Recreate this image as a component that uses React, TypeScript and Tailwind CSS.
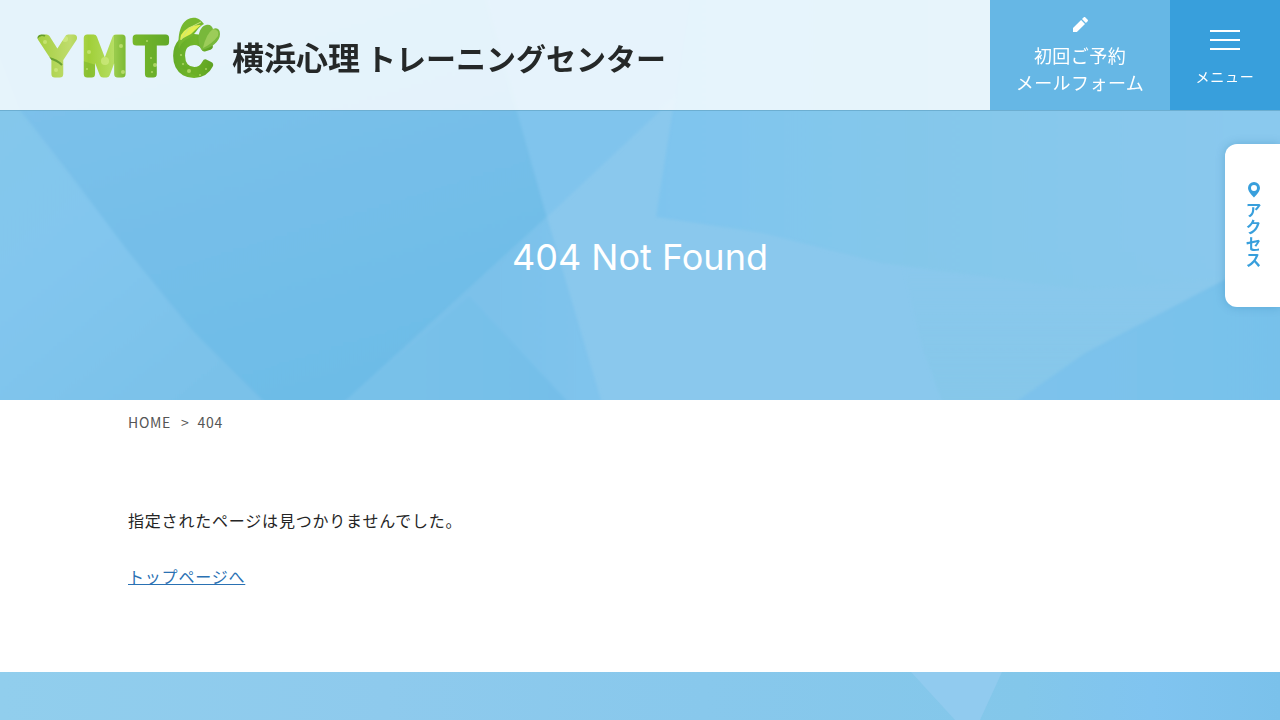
function HeroBackground() {
  return (
    <svg
      className="absolute inset-0 h-full w-full"
      viewBox="0 0 1280 400"
      preserveAspectRatio="none"
      aria-hidden="true"
    >
      <defs>
        <linearGradient id="heroLeft" x1="0" y1="0" x2="0.6" y2="1">
          <stop offset="0" stopColor="#85c7e8" />
          <stop offset="0.6" stopColor="#82c6ee" />
          <stop offset="1" stopColor="#7ac1e9" />
        </linearGradient>
        <linearGradient id="heroDeep" x1="0" y1="0" x2="0.4" y2="1">
          <stop offset="0" stopColor="#80c3ec" />
          <stop offset="0.5" stopColor="#77bfe9" />
          <stop offset="1" stopColor="#6dbce7" />
        </linearGradient>
        <linearGradient id="heroFold" x1="0" y1="0" x2="1" y2="0">
          <stop offset="0" stopColor="#78c1e9" />
          <stop offset="0.6" stopColor="#7bc1ea" />
          <stop offset="1" stopColor="#80c4ed" />
        </linearGradient>
        <linearGradient id="heroFoldDark" x1="0" y1="0" x2="1" y2="0">
          <stop offset="0.3" stopColor="#78c1e9" />
          <stop offset="1" stopColor="#74bee9" />
        </linearGradient>
        <linearGradient id="heroTop" x1="0" y1="0" x2="1" y2="0">
          <stop offset="0" stopColor="#7ec4ee" />
          <stop offset="0.18" stopColor="#81c6ed" />
          <stop offset="0.4" stopColor="#84c7ea" />
          <stop offset="1" stopColor="#8ac9ee" />
        </linearGradient>
        <linearGradient id="heroFade" x1="0" y1="0" x2="0" y2="1">
          <stop offset="0" stopColor="#85c7e9" stopOpacity="0" />
          <stop offset="1" stopColor="#85c7e9" />
        </linearGradient>
        <linearGradient id="heroCorner" x1="0" y1="0" x2="1" y2="0">
          <stop offset="0" stopColor="#7ec2ec" />
          <stop offset="1" stopColor="#76c1ea" />
        </linearGradient>
        <filter id="soften" x="-5%" y="-5%" width="110%" height="110%">
          <feGaussianBlur stdDeviation="1.5" />
        </filter>
      </defs>
      <rect width="1280" height="400" fill="#8ac8ed" />
      <g filter="url(#soften)">
        <polygon points="-40,-20 -40,420 290,420 192,330 20,110 -30,-20" fill="url(#heroLeft)" />
        <polygon points="-30,-20 480,-20 547,217 325,420 282,420 192,330 127,250 69,173 20,110" fill="url(#heroDeep)" />
        <polygon points="325,420 547,217 607,420" fill="url(#heroFold)" />
        <polygon points="325,420 469,297 585,420" fill="url(#heroFoldDark)" />
        <polygon points="480,-20 800,-20 547,217" fill="#80c4ed" />
        <polygon points="693,-20 1300,-20 1300,235 1224,280 1085,290 881,263 762,233 656,217" fill="url(#heroTop)" />
        <polygon points="900,250 1270,250 1224,280 1085,353 990,420 949,420 922,347" fill="url(#heroFade)" />
        <polygon points="1300,235 1224,280 1085,353 990,420 1300,420" fill="url(#heroCorner)" />
      </g>
    </svg>
  );
}

function LogoMark() {
  return (
    <svg className="h-[74px] w-[188px] shrink-0" viewBox="0 0 188 74" role="img" aria-label="YMTC">
      <defs>
        <linearGradient id="leafTone" x1="0" y1="0" x2="1" y2="0">
          <stop offset="0" stopColor="#a3ce3e" />
          <stop offset="0.18" stopColor="#bfdc6c" />
          <stop offset="0.28" stopColor="#a0cf38" />
          <stop offset="0.42" stopColor="#b7df65" />
          <stop offset="0.5" stopColor="#79b92b" />
          <stop offset="0.7" stopColor="#62a928" />
          <stop offset="0.85" stopColor="#71b62a" />
          <stop offset="1" stopColor="#4f911f" />
        </linearGradient>
        <pattern id="leafFill" width="188" height="74" patternUnits="userSpaceOnUse">
          <rect width="188" height="74" fill="url(#leafTone)" />
          <path d="M44 45l16 5-2 16H44zM78 20h14v46H78zM144 52l20-5 22 5-18 14z" fill="#62a51e" opacity=".35" />
          <path d="M0 24q4-6 9-3M13 43q8 2 13 7" fill="none" stroke="#397c18" strokeWidth="2" opacity=".6" />
          <g fill="#d6ef88" opacity=".6">
            <circle cx="9" cy="27" r="2" />
            <circle cx="29" cy="24" r="3" />
            <circle cx="20" cy="55" r="2" />
            <circle cx="53" cy="37" r="2" />
            <circle cx="51" cy="54" r="1" />
            <circle cx="69" cy="46" r="4" />
            <circle cx="85" cy="31" r="2" />
            <circle cx="87" cy="57" r="2" />
            <circle cx="111" cy="26" r="1" />
            <circle cx="115" cy="43" r="1" />
            <circle cx="119" cy="50" r="2" />
            <circle cx="116" cy="57" r="1" />
            <circle cx="145" cy="40" r="1" />
            <circle cx="147" cy="49" r="1" />
            <circle cx="153" cy="56" r="2" />
            <circle cx="164" cy="60" r="1" />
            <circle cx="170" cy="54" r="1" />
          </g>
        </pattern>
      </defs>
      <text
        x="4 47 99 138"
        y="59"
        fontFamily="'Liberation Sans', Arial, sans-serif"
        fontSize="52"
        fill="url(#leafFill)"
        stroke="url(#leafFill)"
        strokeWidth="7"
        strokeLinejoin="round"
      >
        YMTC
      </text>
      {/* Leaves on top of the C */}
      <path d="M143 34C141 17 146 4 156 3c5-1 9 2 12 6-6 3-8 9-12 12-5 4-10 4-13 13z" fill="#76b82f" />
      <path d="M145 20q7-11 20-10-6 5-10 9-6 3-11 6z" fill="#e4ef52" />
      <path d="m145 25 8-12 12-6" fill="none" stroke="#c9e57e" strokeWidth="1" />
      <path d="M166 35C160 27 162 12 170 10c4-1 6 1 7 4 4-2 7 0 7 5 0 8-9 14-18 16z" fill="#78b83b" />
      <path d="M167 33q3-14 10-19 7 1 5 7-6 8-15 12z" fill="#9ccc59" />
    </svg>
  );
}

function Header() {
  return (
    <header className="fixed inset-x-0 top-0 z-20 flex h-[111px] border-b border-[#6caed1]">
      <div className="flex min-w-0 flex-1 items-start bg-white/80 pt-[15px] pl-9">
        <a href="#top" className="flex items-start gap-2 text-[#252828]">
          <LogoMark />
          <span className="flex items-baseline gap-1.5 pt-5 leading-[42px] font-bold whitespace-nowrap">
            <span className="text-[32px]">横浜心理</span>
            <span className="text-[30px]">トレーニングセンター</span>
          </span>
        </a>
      </div>
      <a
        href="#reserve"
        className="flex w-[180px] shrink-0 flex-col items-center bg-[#66b7e5] pt-[15px] text-center text-lg leading-[27px] tracking-wide text-white"
      >
        <svg className="mb-[9px] size-[18px]" viewBox="0 0 18 18" fill="currentColor" aria-hidden="true">
          <path d="M2 13.1V17h3.9L14 8.9 10.1 5zM16.7 6.2c.4-.4.4-1 0-1.4l-2.5-2.5c-.4-.4-1-.4-1.4 0L11 4.1 14.9 8z" />
        </svg>
        <span>初回ご予約</span>
        <span>メールフォーム</span>
      </a>
      <button
        type="button"
        className="flex w-[110px] shrink-0 flex-col items-center bg-[#389fdc] pt-[30px] text-sm tracking-wider text-white"
      >
        <span className="flex flex-col gap-[7px]" aria-hidden="true">
          <span className="h-0.5 w-[30px] bg-white" />
          <span className="h-0.5 w-[30px] bg-white" />
          <span className="h-0.5 w-[30px] bg-white" />
        </span>
        <span className="mt-4">メニュー</span>
      </button>
    </header>
  );
}

function AccessTab() {
  return (
    <a
      href="#access"
      className="fixed top-36 right-0 z-10 flex h-[163px] w-[55px] flex-col items-center justify-center gap-1 rounded-l-xl bg-white pl-0.5 text-[#389fdc] shadow-[0_0_10px_rgba(0,90,150,0.25)]"
    >
      <svg className="h-4 w-3" viewBox="0 0 12 16" fill="currentColor" fillRule="evenodd" aria-hidden="true">
        <path d="M6 0a6 6 0 0 0-6 6c0 4 6 9.5 6 9.5S12 10 12 6a6 6 0 0 0-6-6zm0 3a3 3 0 1 1 0 6 3 3 0 0 1 0-6z" />
      </svg>
      <span className="text-base leading-5 font-bold tracking-wider [writing-mode:vertical-rl]">
        アクセス
      </span>
    </a>
  );
}

export default function App() {
  return (
    <div
      id="top"
      lang="ja"
      className="flex min-h-screen flex-col bg-white font-['Noto_Sans_CJK_JP',sans-serif] text-[#252525]"
    >
      <Header />
      <AccessTab />

      <div className="relative flex h-[400px] items-center justify-center overflow-hidden pt-[114px]">
        <HeroBackground />
        <h1 className="relative font-[Inter,sans-serif] text-4xl text-white">404 Not Found</h1>
      </div>

      <main className="px-[10%] pb-[82px]">
        <nav aria-label="breadcrumb" className="pt-3">
          <ol className="flex gap-2.5 text-sm tracking-wider text-[#555]">
            <li>
              <a href="#top">HOME</a>
            </li>
            <li className="before:mr-2 before:content-['>']">404</li>
          </ol>
        </nav>
        <div className="pt-[74px] text-base leading-7 tracking-wider">
          <p>指定されたページは見つかりませんでした。</p>
          <p className="mt-7">
            <a href="#top" className="text-[#2a71b3] underline">
              トップページへ
            </a>
          </p>
        </div>
      </main>

      <footer className="min-h-12 flex-1 overflow-hidden bg-[#89c9ec]">
        <svg className="block h-12 w-full" viewBox="0 0 1280 48" preserveAspectRatio="none" aria-hidden="true">
          <defs>
            <linearGradient id="footerTone" x1="0" y1="0" x2="1" y2="0">
              <stop offset="0" stopColor="#91ceed" />
              <stop offset="0.3" stopColor="#8ecaed" />
              <stop offset="0.55" stopColor="#88c8ec" />
              <stop offset="0.8" stopColor="#83c7ea" />
              <stop offset="0.9" stopColor="#80c4f0" />
              <stop offset="1" stopColor="#7ac1eb" />
            </linearGradient>
          </defs>
          <rect width="1280" height="48" fill="url(#footerTone)" />
          <polygon points="911,0 1002,0 980,48 955,48" fill="#91cbef" />
        </svg>
      </footer>
    </div>
  );
}
